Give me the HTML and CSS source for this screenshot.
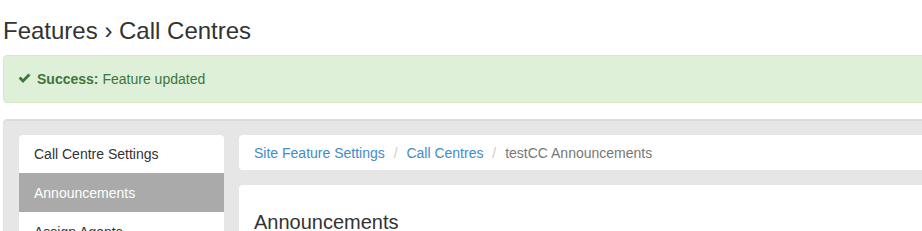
FILE: index.html
```
<!DOCTYPE html>
<html lang="en">
<head>
<meta charset="utf-8">
<title>Features › Call Centres</title>
<link rel="stylesheet" href="styles.css">
</head>
<body>
<div class="page">
  <h1 class="page-title">Features › Call Centres</h1>
  <div class="alert">
    <svg class="check" width="13" height="11" viewBox="0 0 13 11" aria-hidden="true"><path d="M0.6 5.6 L2.6 3.6 L5 6 L10.4 0.6 L12.4 2.6 L5 10 Z" fill="#3c763d"/></svg>
    <strong>Success:</strong> Feature updated
  </div>
  <div class="well">
    <ul class="side-nav">
      <li class="side-item">Call Centre Settings</li>
      <li class="side-item active">Announcements</li>
      <li class="side-item">Assign Agents</li>
    </ul>
    <div class="main">
      <ol class="breadcrumb">
        <li><a href="#">Site Feature Settings</a></li>
        <li><a href="#">Call Centres</a></li>
        <li class="current">testCC Announcements</li>
      </ol>
      <div class="panel">
        <h2 class="panel-title">Announcements</h2>
      </div>
    </div>
  </div>
</div>
</body>
</html>
```
FILE: styles.css
```
html {
  overflow: hidden;
}
body {
  margin: 0;
  background: #fff;
  font-family: "Liberation Sans", Arial, Helvetica, sans-serif;
  font-size: 14px;
  line-height: 20px;
  color: #333;
}
.page {
  width: 1170px;
  padding-left: 3px;
}
.page-title {
  margin: 0;
  padding-top: 18px;
  font-size: 24px;
  font-weight: normal;
  line-height: 26px;
  color: #333;
}
.alert {
  margin-top: 11px;
  padding: 13px 14px;
  background: #dff0d8;
  border: 1px solid #d6e9c6;
  border-radius: 4px;
  color: #3c763d;
  display: flex;
  align-items: center;
}
.alert .check {
  margin-right: 6px;
  margin-top: -1px;
}
.alert strong {
  margin-right: 4px;
}
.well {
  margin-top: 16px;
  display: flex;
  gap: 15px;
  align-items: flex-start;
  padding: 15px;
  background: #e6e6e6;
  border-top: 1px solid #dcdcdc;
  border-left: 1px solid #e3e3e3;
  border-radius: 4px 0 0 0;
  box-shadow: inset 0 1px 1px rgba(0, 0, 0, 0.05);
  height: 200px;
}
.side-nav {
  list-style: none;
  margin: 0;
  padding: 0;
  width: 205px;
  flex: none;
  background: #fff;
  border-radius: 4px 4px 0 0;
  overflow: hidden;
}
.side-item {
  padding: 9px 15px;
  line-height: 20px;
  color: #333;
}
.side-item + .side-item {
  border-top: 1px solid #fff;
}
.side-item.active {
  background: #aaa;
  border-top-color: #aaa;
  color: #fff;
}
.main {
  flex: 1;
}
.breadcrumb {
  list-style: none;
  margin: 0;
  padding: 7.5px 15px;
  background: #fff;
  border-radius: 4px;
}
.breadcrumb li {
  display: inline-block;
}
.breadcrumb li + li::before {
  content: "/\00a0";
  padding: 0 5px;
  color: #ccc;
}
.breadcrumb a {
  color: #428bca;
  text-decoration: none;
}
.breadcrumb .current {
  color: #777;
}
.panel {
  margin-top: 15px;
  padding: 15px;
  background: #fff;
  border-radius: 4px;
  height: 100px;
}
.panel-title {
  margin: 11px 0 0;
  font-size: 20px;
  font-weight: normal;
  line-height: 22px;
  color: #333;
}
```
